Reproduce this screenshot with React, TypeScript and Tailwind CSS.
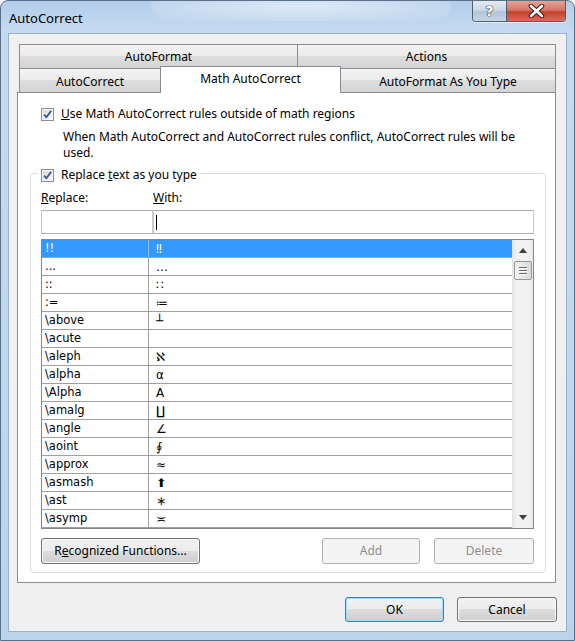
import React from "react";

const rows: [string, string][] = [
  ["!!", "‼"],
  ["...", "…"],
  ["::", "∷"],
  [":=", "≔"],
  ["\\above", "┴"],
  ["\\acute", ""],
  ["\\aleph", "ℵ"],
  ["\\alpha", "α"],
  ["\\Alpha", "Α"],
  ["\\amalg", "∐"],
  ["\\angle", "∠"],
  ["\\aoint", "∮"],
  ["\\approx", "≈"],
  ["\\asmash", "⬆"],
  ["\\ast", "∗"],
  ["\\asymp", "≍"],
];

function Check() {
  return (
    <span className="flex h-[13px] w-[13px] shrink-0 items-center justify-center border border-[#8e8f8f] bg-[linear-gradient(135deg,#d6d6d6,#fdfdfd)] shadow-[inset_0_0_0_1px_#f6f6f6]">
      <svg width="11" height="11" viewBox="0 0 11 11">
        <path d="M2 5.6 L4.4 8.2 L9.2 1.8" fill="none" stroke="#3f5791" strokeWidth="1.9" strokeLinejoin="round" />
      </svg>
    </span>
  );
}

export default function App() {
  return (
    <div className="relative flex h-[641px] w-[575px] flex-col overflow-hidden rounded-t-[8px] border border-[#5b6f89] bg-[linear-gradient(180deg,#b3cdea_0px,#c6dbf1_34px,#bcd3ec_100%)] font-['Noto_Sans',sans-serif] text-[12px] text-black">
      {/* glass streaks */}
      <div className="pointer-events-none absolute left-[150px] top-[-10px] h-[30px] w-[300px] rounded-full bg-[radial-gradient(ellipse_at_center,rgba(255,255,255,0.55),rgba(255,255,255,0))]" />
      {/* title bar */}
      <div className="relative flex h-[32px] items-start justify-between">
        <div className="pl-[8px] pt-[7px] text-[13px] leading-[20px] text-black">AutoCorrect</div>
        <div className="-mt-px mr-[8px] flex h-[22px] overflow-hidden rounded-b-[4px] border border-t-0 border-[#4f5d70] shadow-[0_1px_0_rgba(255,255,255,0.6)]">
          <div className="flex h-[22px] w-[34px] items-center justify-center border-r border-[#4f5d70] bg-[linear-gradient(180deg,#e6eef6_0%,#cbd8e6_45%,#b2c4d7_55%,#c9d8e8_100%)]">
            <span className="font-['DejaVu_Sans',sans-serif] text-[14px] font-bold leading-[14px] text-white [text-shadow:0_0_1px_#333,0_0_1px_#333,0_0_1px_#333]">
              ?
            </span>
          </div>
          <div className="flex h-[22px] w-[58px] items-center justify-center bg-[linear-gradient(180deg,#e9a99c_0%,#d47766_45%,#c2422c_55%,#d9735c_100%)]">
            <svg width="17" height="14" viewBox="0 0 17 14">
              <path d="M3 2 L14 12 M14 2 L3 12" stroke="#3b1f1b" strokeWidth="4.6" strokeLinecap="round" />
              <path d="M3 2 L14 12 M14 2 L3 12" stroke="#ffffff" strokeWidth="2.6" strokeLinecap="round" />
            </svg>
          </div>
        </div>
      </div>

      {/* client area */}
      <div className="ml-[7px] flex h-[599px] w-[559px] flex-col border border-[#9cb0c6] bg-[#f0f0f0]">
        <div className="ml-[8px] mt-[10px] flex flex-col">
          {/* tab row 1 */}
          <div className="flex h-[24px] pl-[2px]">
            <div className="flex w-[279px] items-center justify-center border-l border-r border-t border-[#898c95] bg-[linear-gradient(180deg,#f3f3f3_0%,#ebebeb_50%,#dddddd_50%,#d4d4d4_100%)]">
              AutoFormat
            </div>
            <div className="-ml-px flex w-[259px] items-center justify-center border-l border-r border-t border-[#898c95] bg-[linear-gradient(180deg,#f3f3f3_0%,#ebebeb_50%,#dddddd_50%,#d4d4d4_100%)]">
              Actions
            </div>
          </div>
          {/* tab row 2 */}
          <div className="flex h-[24px] items-end pl-[2px]">
            <div className="flex h-[24px] w-[142px] items-center justify-center border-l border-r border-t border-[#898c95] bg-[linear-gradient(180deg,#f3f3f3_0%,#ebebeb_50%,#dddddd_50%,#d4d4d4_100%)] pt-[3px]">
              AutoCorrect
            </div>
            <div className="relative z-10 -mb-px -ml-px flex h-[27px] w-[181px] items-center justify-center border-l border-r border-t border-[#898c95] bg-white pb-[2px]">
              Math AutoCorrect
            </div>
            <div className="-ml-px flex h-[24px] w-[216px] items-center justify-center border-l border-r border-t border-[#898c95] bg-[linear-gradient(180deg,#f3f3f3_0%,#ebebeb_50%,#dddddd_50%,#d4d4d4_100%)] pt-[3px]">
              AutoFormat As You Type
            </div>
          </div>

          {/* panel */}
          <div className="flex h-[491px] w-[539px] flex-col border border-[#898c95] bg-white">
            <div className="ml-[23px] mt-[13px] flex h-[16px] items-center gap-[7px] leading-[16px]">
              <Check />
              <span className="whitespace-nowrap">
                <span className="underline">U</span>se Math AutoCorrect rules outside of math regions
              </span>
            </div>
            <div className="ml-[45px] mt-[7px] whitespace-nowrap leading-[16px]">
              When Math AutoCorrect and AutoCorrect rules conflict, AutoCorrect rules will be
              <br />
              used.
            </div>

            {/* group box */}
            <div className="relative ml-[12px] mt-[12px] flex h-[400px] w-[516px] flex-col rounded-[4px] border border-[#d5dfe5]">
              <div className="absolute left-[7px] top-[-7px] flex h-[16px] items-center gap-[7px] bg-white px-[3px] leading-[16px]">
                <Check />
                <span className="whitespace-nowrap">
                  Replace <span className="underline">t</span>ext as you type
                </span>
              </div>

              <div className="ml-[10px] mt-[16px] flex leading-[16px]">
                <span className="w-[112px]">
                  <span className="underline">R</span>eplace:
                </span>
                <span>
                  <span className="underline">W</span>ith:
                </span>
              </div>

              <div className="ml-[10px] mt-[4px] flex h-[24px]">
                <div className="h-[24px] w-[112px] border border-[#abadb3] border-l-[#c9cbd0] border-r-[#c9cbd0] bg-white" />
                <div className="flex h-[24px] w-[381px] items-center border border-[#abadb3] border-l-[#c9cbd0] border-r-[#c9cbd0] bg-white pl-[2px]">
                  <span className="h-[15px] w-px bg-black" />
                </div>
              </div>

              {/* list */}
              <div className="ml-[10px] mt-[5px] flex h-[290px] w-[493px] border border-[#828790] bg-white font-['DejaVu_Sans',sans-serif] text-[11.5px]">
                <div className="flex w-[470px] flex-col">
                  {rows.map(([a, b], i) => (
                    <div
                      key={a}
                      className={
                        i === 0
                          ? "flex h-[18px] border-b border-[#a0a0a0] bg-[#3399ff] text-white"
                          : "flex h-[18px] border-b border-[#a0a0a0] text-black"
                      }
                    >
                      <div
                        className={
                          i === 0
                            ? "flex w-[107px] items-center border-r border-[#8dbbea] pl-[3px]"
                            : "flex w-[107px] items-center border-r border-[#a0a0a0] pl-[3px]"
                        }
                      >
                        {a}
                      </div>
                      <div className="flex flex-1 items-center pl-[7px] text-[12px]">{b}</div>
                    </div>
                  ))}
                </div>
                {/* scrollbar */}
                <div className="flex w-[21px] flex-col border-l border-[#e4e4e4] bg-[linear-gradient(90deg,#e8e8e8,#f2f2f2_20%,#f2f2f2_80%,#e8e8e8)]">
                  <div className="flex h-[21px] items-center justify-center">
                    <svg width="8" height="5" viewBox="0 0 8 5">
                      <polygon points="0,5 8,5 4,0" fill="#404040" />
                    </svg>
                  </div>
                  <div className="mx-px flex h-[19px] flex-col items-center justify-center gap-[2px] rounded-[2px] border border-[#979797] bg-[linear-gradient(90deg,#f4f4f4,#e6e6e6_50%,#dadada)]">
                    <span className="h-px w-[8px] bg-[#6a6a6a] shadow-[0_1px_0_#ffffff]" />
                    <span className="h-px w-[8px] bg-[#6a6a6a] shadow-[0_1px_0_#ffffff]" />
                    <span className="h-px w-[8px] bg-[#6a6a6a] shadow-[0_1px_0_#ffffff]" />
                  </div>
                  <div className="flex-1" />
                  <div className="flex h-[21px] items-center justify-center">
                    <svg width="8" height="5" viewBox="0 0 8 5">
                      <polygon points="0,0 8,0 4,5" fill="#404040" />
                    </svg>
                  </div>
                </div>
              </div>

              {/* buttons */}
              <div className="ml-[10px] mt-[9px] flex h-[26px] w-[493px]">
                <div className="flex w-[159px] items-center justify-center rounded-[3px] border border-[#707070] bg-[linear-gradient(180deg,#f2f2f2_0%,#ebebeb_50%,#dddddd_50%,#cfcfcf_100%)] shadow-[inset_0_0_0_1px_#fbfbfb]">
                  R<span className="underline">e</span>cognized Functions...
                </div>
                <div className="ml-auto flex w-[98px] items-center justify-center rounded-[3px] border border-[#adb2b5] bg-[#f4f4f4] text-[#8d8d8d]">
                  Add
                </div>
                <div className="ml-[14px] flex w-[100px] items-center justify-center rounded-[3px] border border-[#adb2b5] bg-[#f4f4f4] text-[#8d8d8d]">
                  Delete
                </div>
              </div>
            </div>
          </div>
        </div>

        {/* dialog buttons */}
        <div className="mt-[14px] flex h-[25px] justify-end pr-[9px]">
          <div className="flex w-[99px] items-center justify-center rounded-[3px] border border-[#3c7fb1] bg-[linear-gradient(180deg,#f2f2f2_0%,#ebebeb_50%,#dddddd_50%,#cfcfcf_100%)] shadow-[inset_0_0_0_1px_#a6dcf7]">
            OK
          </div>
          <div className="ml-[13px] flex w-[100px] items-center justify-center rounded-[3px] border border-[#707070] bg-[linear-gradient(180deg,#f2f2f2_0%,#ebebeb_50%,#dddddd_50%,#cfcfcf_100%)] shadow-[inset_0_0_0_1px_#fbfbfb]">
            Cancel
          </div>
        </div>
      </div>
    </div>
  );
}
